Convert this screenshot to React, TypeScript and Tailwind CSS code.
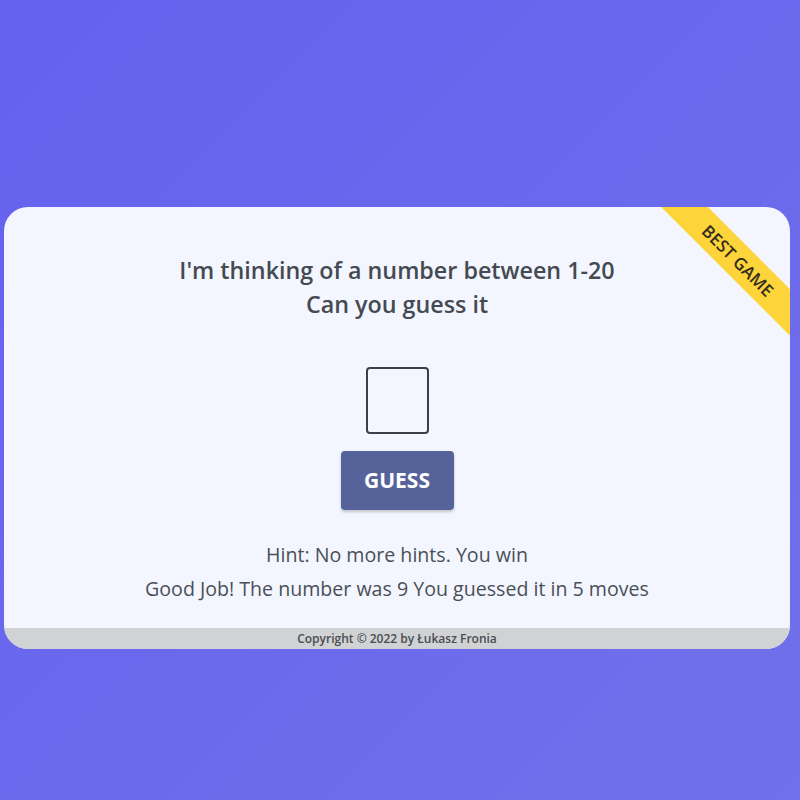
import React, { useState } from 'react'

export default function App() {
  const [guess, setGuess] = useState('')

  return (
    <div
      className="w-[800px] h-[800px] overflow-hidden bg-gradient-to-br from-[#6461ef] to-[#7170ea] pt-[207px]"
      style={{ fontFamily: '"Open Sans", "Noto Sans", sans-serif' }}
    >
      {/* Card */}
      <div className="relative ml-[4px] w-[786px] h-[442px] rounded-[24px] overflow-hidden bg-[#f3f6fe] flex flex-col">
        <div className="absolute top-[37px] right-[-48px] w-[200px] h-[33px] rotate-45 bg-[#fed43b] flex items-center justify-center text-[17px] font-semibold text-[#352f1c]">
          BEST GAME
        </div>

        <div className="flex flex-col items-center flex-1 pt-[46px]">
          <h1 className="text-[23.3px] leading-[34px] font-semibold text-[#454a52] text-center">
            I'm thinking of a number between 1-20
            <br />
            Can you guess it
          </h1>

          <input
            value={guess}
            onChange={(e) => setGuess(e.target.value)}
            className="mt-[46px] w-[63px] h-[67px] border-2 border-[#3b4047] rounded-[4px] bg-transparent text-center text-2xl outline-none"
          />

          <button className="mt-[17px] w-[113px] h-[59px] rounded-[4px] bg-[#56639b] text-white text-[21px] font-bold shadow-[0_2px_3px_rgba(0,0,0,0.2)]">
            GUESS
          </button>

          <p className="mt-[32px] text-[19.6px] leading-[26px] text-[#4a4f57]">
            Hint: No more hints. You win
          </p>
          <p className="mt-[8px] text-[19.6px] leading-[26px] text-[#4a4f57]">
            Good Job! The number was 9 You guessed it in 5 moves
          </p>
        </div>

        {/* Footer */}
        <div className="h-[21px] bg-[#d1d2d4] flex items-center justify-center text-[12px] font-semibold text-[#4a4d52]">
          Copyright © 2022 by Łukasz Fronia
        </div>
      </div>
    </div>
  )
}
